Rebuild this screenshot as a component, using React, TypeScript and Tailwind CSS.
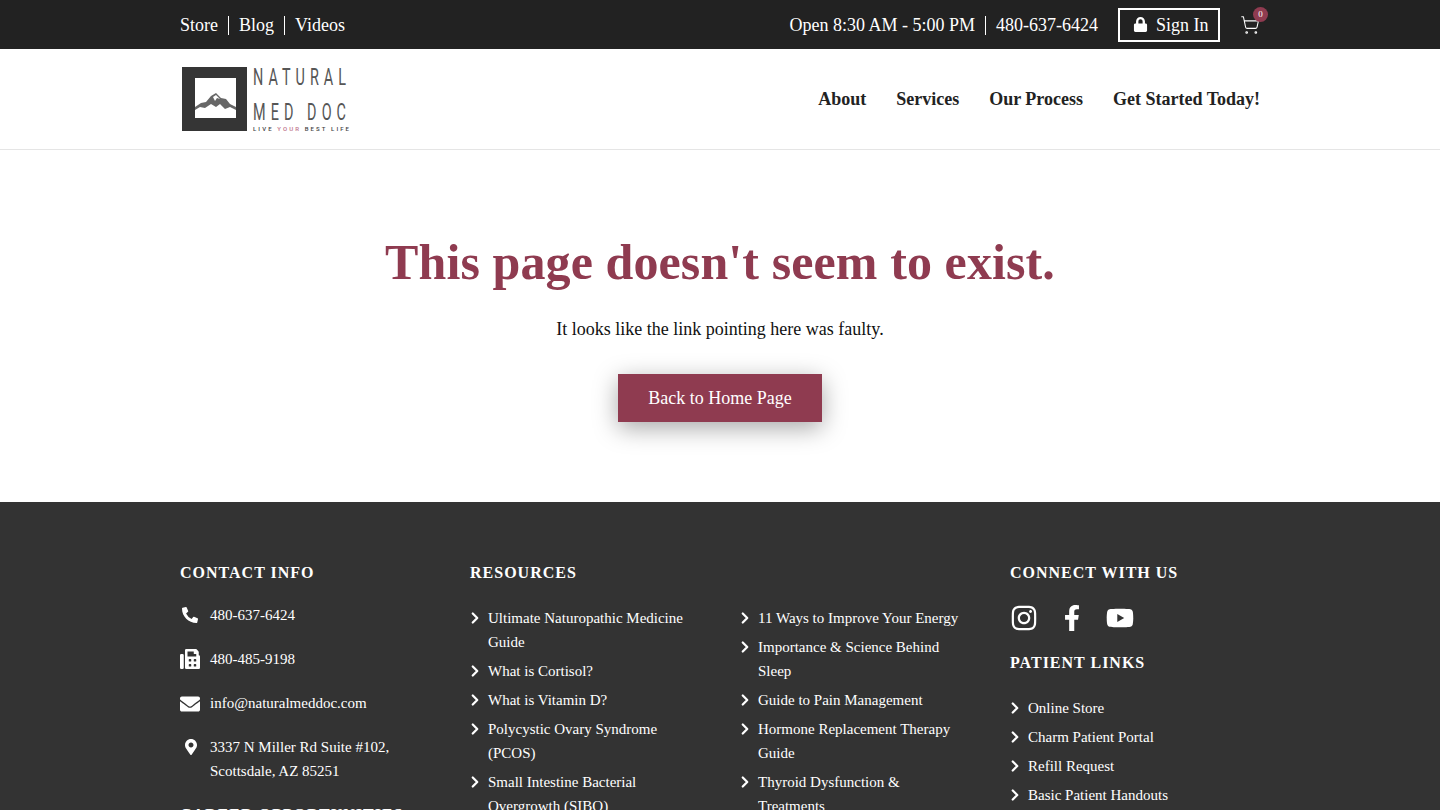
import { ChevronRight, ShoppingCart } from 'lucide-react';
import {
  FaEnvelope,
  FaFacebookF,
  FaFax,
  FaInstagram,
  FaLock,
  FaMapMarkerAlt,
  FaPhoneAlt,
  FaYoutube,
} from 'react-icons/fa';

const resourcesLeft = [
  'Ultimate Naturopathic Medicine Guide',
  'What is Cortisol?',
  'What is Vitamin D?',
  'Polycystic Ovary Syndrome (PCOS)',
  'Small Intestine Bacterial Overgrowth (SIBO)',
];

const resourcesRight = [
  '11 Ways to Improve Your Energy',
  'Importance & Science Behind Sleep',
  'Guide to Pain Management',
  'Hormone Replacement Therapy Guide',
  'Thyroid Dysfunction & Treatments',
];

const patientLinks = ['Online Store', 'Charm Patient Portal', 'Refill Request', 'Basic Patient Handouts'];

function Logo() {
  return (
    <svg width="172" height="68" viewBox="0 0 172 68" className="block opacity-99">
      <rect x="2" y="2" width="65" height="64" fill="#333" />
      <rect x="15" y="13" width="41" height="40" fill="#fff" />
      <path d="M15 42 L21 38 L26 37 L31 31 L36 28 L41 33 L46 34 L50 39 L56 42 L56 45 L50 42 L45 44 L40 39 L36 42 L31 39 L25 43 L20 42 L15 45 Z" fill="#666" />
      <path d="M33 32 L36 30 L40 34 L37 33 L35 36 Z" fill="#fff" />
      <text
        transform="translate(73 20) scale(0.6 1)"
        textLength="155"
        lengthAdjust="spacing"
        fontFamily="Roboto, sans-serif"
        fontWeight="400"
        fontSize="24"
        fill="#555"
      >
        NATURAL
      </text>
      <text
        transform="translate(73 55) scale(0.6 1)"
        textLength="155"
        lengthAdjust="spacing"
        fontFamily="Roboto, sans-serif"
        fontWeight="400"
        fontSize="24"
        fill="#555"
      >
        MED DOC
      </text>
      <text x="73" y="66" textLength="96" fontFamily="Roboto, sans-serif" fontWeight="500" fontSize="6" fill="#444">
        LIVE <tspan fill="#c0728a">YOUR</tspan> BEST LIFE
      </text>
    </svg>
  );
}

function LinkList({ items }: { items: string[] }) {
  return (
    <ul className="flex flex-col gap-[5px]">
      {items.map((item) => (
        <li key={item} className="flex">
          <ChevronRight size={18} strokeWidth={3} className="mt-[3px] mr-[4px] ml-[-4px] shrink-0" />
          <span>{item}</span>
        </li>
      ))}
    </ul>
  );
}

export default function App() {
  return (
    <div className="h-[810px] overflow-hidden bg-white font-['Liberation_Serif',serif] text-[#222]">
      {/* Top bar */}
      <div className="h-[49px] bg-[#222] text-white">
        <div className="mx-auto flex h-full w-[1080px] items-center justify-between text-[18px]">
          <div className="flex items-center pt-[1px]">
            <a className="border-r border-white pr-[10px] leading-[19px]">Store</a>
            <a className="border-r border-white px-[10px] leading-[19px]">Blog</a>
            <a className="pl-[10px] leading-[19px]">Videos</a>
          </div>
          <div className="flex items-center">
            <span className="mt-[1px] border-r border-white pr-[10px] leading-[19px]">Open 8:30 AM - 5:00 PM</span>
            <span className="mt-[1px] pl-[10px] leading-[19px]">480-637-6424</span>
            <a className="ml-5 flex h-[34px] w-[102px] items-center gap-[8px] border-2 border-white pl-[13px]">
              <FaLock size={15} />
              <span className="mt-[1px]">Sign In</span>
            </a>
            <div className="relative ml-5 h-[20px] w-[20px]">
              <ShoppingCart size={20} strokeWidth={1.25} />
              <span className="absolute top-[-8px] left-[13px] flex h-[15px] w-[15px] items-center justify-center rounded-full bg-[#8f3b50] text-[9px] leading-none">
                0
              </span>
            </div>
          </div>
        </div>
      </div>

      {/* Header */}
      <header className="h-[101px] border-b border-[#e5e5e5] bg-white">
        <div className="mx-auto flex h-full w-[1080px] items-center justify-between">
          <Logo />
          <nav className="flex gap-[30px] text-[18px] font-bold">
            <a>About</a>
            <a>Services</a>
            <a>Our Process</a>
            <a>Get Started Today!</a>
          </nav>
        </div>
      </header>

      {/* 404 */}
      <main className="flex h-[352px] flex-col items-center pt-[79px]">
        <h1 className="text-[50px] leading-[66px] font-bold tracking-[0.1px] text-[#8f3b50]">This page doesn't seem to exist.</h1>
        <p className="mt-[21px] text-[18px] leading-[26px] text-[#111]">It looks like the link pointing here was faulty.</p>
        <a className="mt-[32px] flex h-[48px] w-[204px] items-center justify-center bg-[#8f3b50] text-[18px] text-white shadow-[0_6px_24px_rgba(0,0,0,0.35)]">
          Back to Home Page
        </a>
      </main>

      {/* Footer */}
      <footer className="bg-[#333] pt-[60px] text-white">
        <div className="mx-auto grid w-[1080px] grid-cols-[290px_270px_270px_250px] text-[15px] leading-[24px]">
          <div>
            <h3 className="text-[16px] leading-[22px] font-bold tracking-[1px]">CONTACT INFO</h3>
            <ul className="mt-[19px] flex flex-col gap-[20px]">
              <li className="flex">
                <span className="flex h-[24px] w-[30px] items-center pl-[2px]">
                  <FaPhoneAlt size={16} />
                </span>
                480-637-6424
              </li>
              <li className="flex">
                <span className="flex h-[24px] w-[30px] items-center">
                  <FaFax size={20} />
                </span>
                480-485-9198
              </li>
              <li className="flex">
                <span className="flex h-[24px] w-[30px] items-center">
                  <FaEnvelope size={20} className="mt-[2px]" />
                </span>
                info@naturalmeddoc.com
              </li>
              <li className="flex">
                <span className="flex h-[24px] w-[30px] items-center pl-[3px]">
                  <FaMapMarkerAlt size={16} />
                </span>
                <span>
                  3337 N Miller Rd Suite #102,
                  <br />
                  Scottsdale, AZ 85251
                </span>
              </li>
            </ul>
            <h3 className="mt-[21px] text-[16px] leading-[22px] font-bold tracking-[1px]">CAREER OPPORTUNITIES</h3>
          </div>

          <div className="col-span-2">
            <h3 className="text-[16px] leading-[22px] font-bold tracking-[1px]">RESOURCES</h3>
            <div className="mt-[22px] grid grid-cols-[270px_220px]">
              <div className="w-[220px]">
                <LinkList items={resourcesLeft} />
              </div>
              <LinkList items={resourcesRight} />
            </div>
          </div>

          <div>
            <h3 className="text-[16px] leading-[22px] font-bold tracking-[1px]">CONNECT WITH US</h3>
            <div className="mt-[20px] flex items-center gap-[20px]">
              <FaInstagram size={28} />
              <span className="flex w-[28px] justify-center">
                <FaFacebookF size={26} />
              </span>
              <FaYoutube size={28} />
            </div>
            <h3 className="mt-[20px] text-[16px] leading-[22px] font-bold tracking-[1px]">PATIENT LINKS</h3>
            <div className="mt-[22px]">
              <LinkList items={patientLinks} />
            </div>
          </div>
        </div>
      </footer>
    </div>
  );
}
